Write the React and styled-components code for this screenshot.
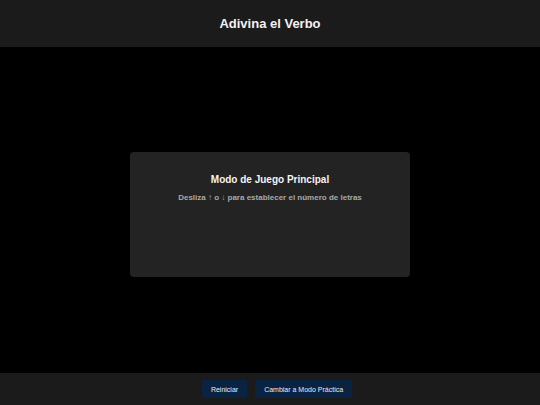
import React from "react";
import styled, { createGlobalStyle } from "styled-components";

const Global = createGlobalStyle`
  html, body { margin: 0; padding: 0; background: #000; }
  body { font-family: "Liberation Sans", Arial, sans-serif; }
  #root { height: 100vh; }
`;

const Page = styled.div`
  height: 405px;
  display: flex;
  flex-direction: column;
  background: #000;
  color: #fff;
`;

const Header = styled.header`
  height: 47px;
  background: #1b1b1b;
  display: flex;
  align-items: center;
  justify-content: center;
  flex-shrink: 0;
`;

const Title = styled.h1`
  margin: 0;
  font-size: 13px;
  font-weight: bold;
  color: #f2f2f2;
`;

const Main = styled.main`
  flex: 1;
  display: flex;
  align-items: center;
  justify-content: center;
  padding-top: 9px;
`;

const Card = styled.section`
  width: 280px;
  height: 125px;
  box-sizing: border-box;
  background: #232323;
  border-radius: 4px;
  padding-top: 22px;
  display: flex;
  flex-direction: column;
  align-items: center;
`;

const CardTitle = styled.h2`
  margin: 0;
  font-size: 10px;
  font-weight: bold;
  color: #f4f4f4;
`;

const CardHint = styled.p`
  margin: 8px 0 0;
  font-size: 8px;
  font-weight: bold;
  color: #a8a8a8;
`;

const Footer = styled.footer`
  height: 32px;
  background: #1b1b1b;
  display: flex;
  align-items: center;
  justify-content: center;
  gap: 8px;
  padding-left: 14px;
  flex-shrink: 0;
`;

const Button = styled.button`
  height: 18px;
  padding: 0 ${(p) => p.$px}px;
  border: none;
  border-radius: 2px;
  background: #0b2343;
  color: #e8ecf2;
  font-family: "Liberation Sans", Arial, sans-serif;
  font-size: 7px;
  cursor: pointer;
`;

export default function App() {
  return (
    <>
      <Global />
      <Page>
        <Header>
          <Title>Adivina el Verbo</Title>
        </Header>
        <Main>
          <Card>
            <CardTitle>Modo de Juego Principal</CardTitle>
            <CardHint>Desliza ↑ o ↓ para establecer el número de letras</CardHint>
          </Card>
        </Main>
        <Footer>
          <Button $px={9}>Reiniciar</Button>
          <Button $px={9}>Cambiar a Modo Práctica</Button>
        </Footer>
      </Page>
    </>
  );
}
